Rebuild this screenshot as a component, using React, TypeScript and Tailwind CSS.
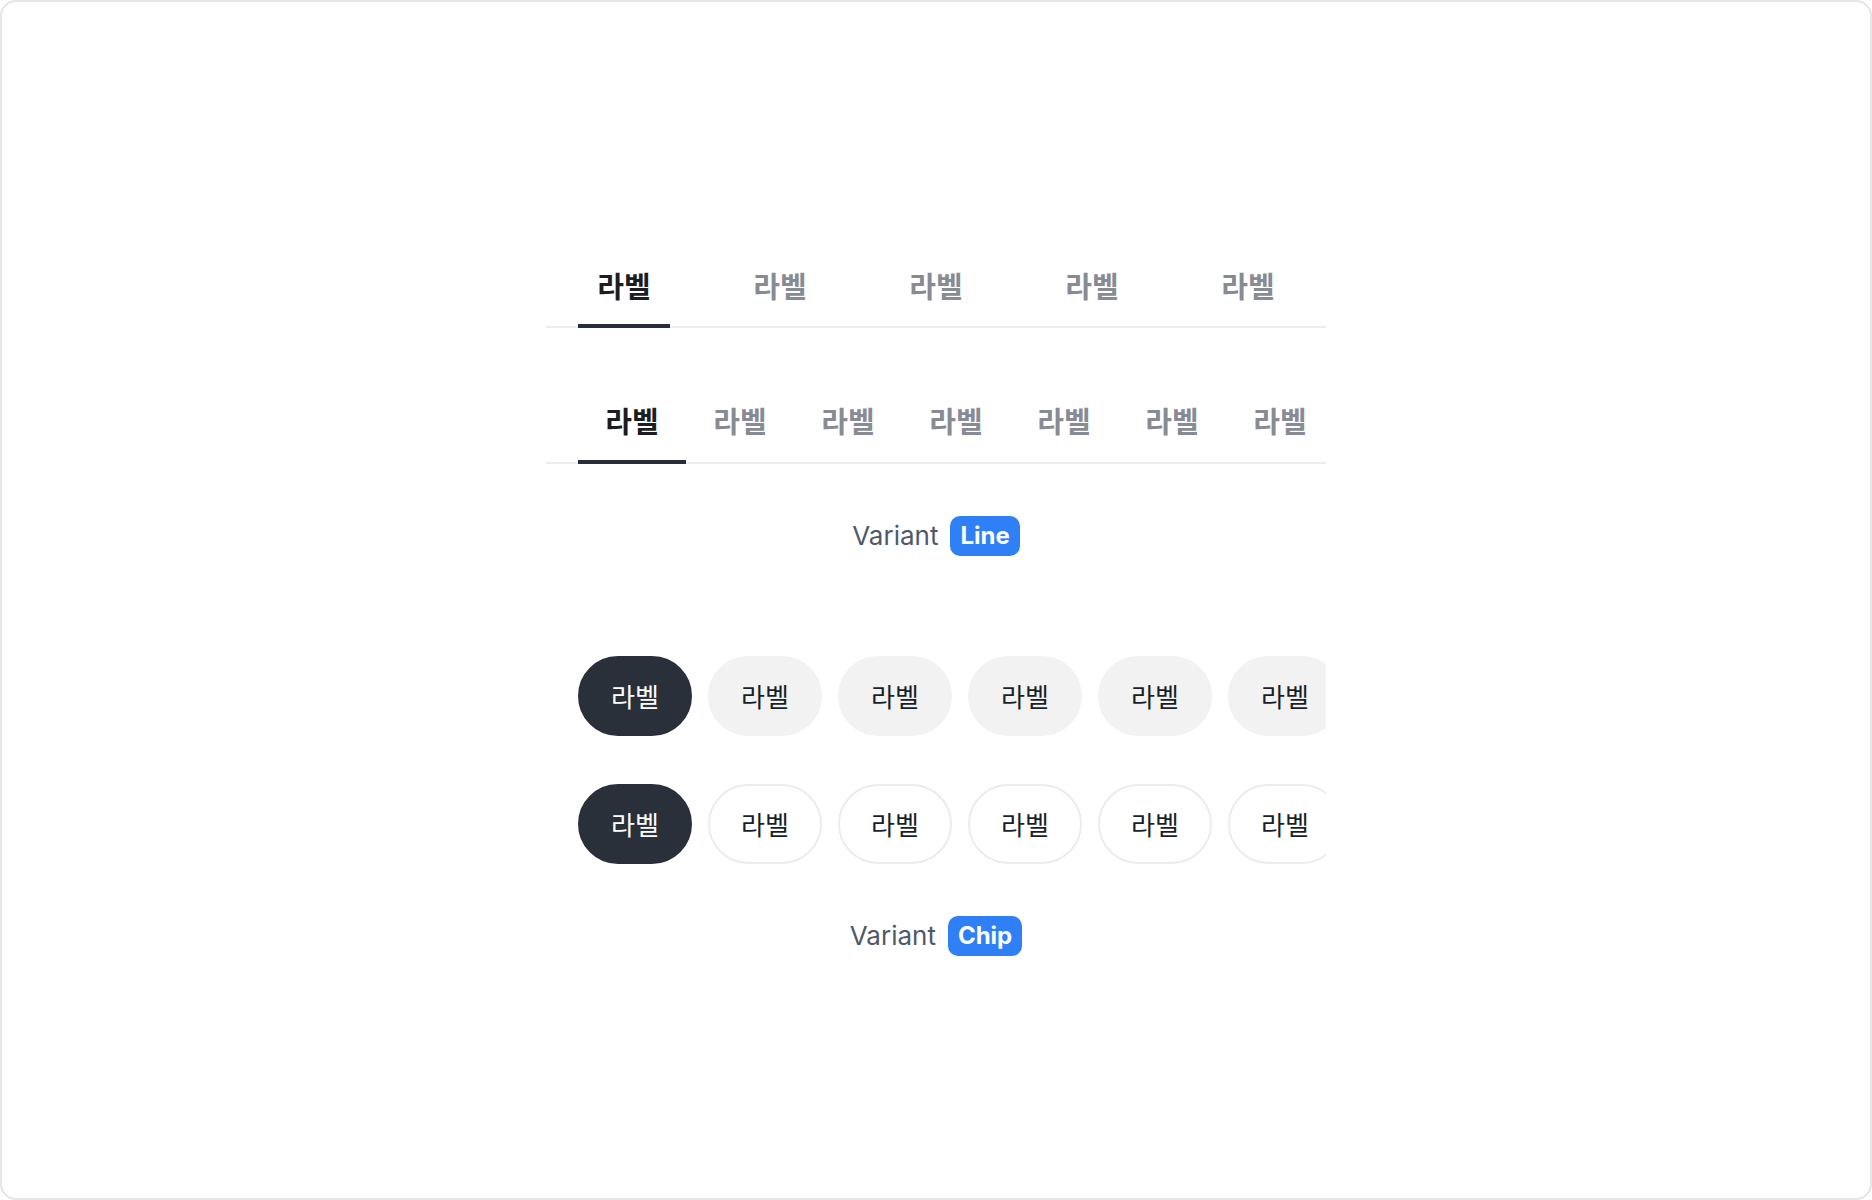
import { useState } from "react";

const KR_FONT = "font-['Noto_Sans_CJK_KR','Noto_Sans',sans-serif]";
const LATIN_FONT = "font-['Inter','Noto_Sans_CJK_KR',sans-serif]";

const LABEL = "라벨";

function VariantTag({ name }: { name: string }) {
  return (
    <div className={`mx-auto flex items-center gap-3 ${LATIN_FONT}`}>
      <span className="text-[26px] text-[#4e5968]">Variant</span>
      <span className="flex h-10 items-center rounded-[10px] bg-[#2f80f6] px-[10px] text-[24px] font-bold text-white">
        {name}
      </span>
    </div>
  );
}

function LineTabs({
  count,
  spread,
}: {
  count: number;
  spread?: boolean;
}) {
  const [active, setActive] = useState(0);
  return (
    // divider drawn as an inset shadow so the active tab's bar can sit over it
    <div
      className={`flex overflow-hidden px-8 shadow-[inset_0_-2px_0_#eeeeee] ${
        spread ? "justify-between" : ""
      }`}
    >
      {Array.from({ length: count }).map((_, i) => (
        <button
          key={i}
          type="button"
          onClick={() => setActive(i)}
          className={`flex shrink-0 justify-center border-b-4 pt-5 text-[29px] leading-[40px] font-bold ${KR_FONT} ${
            spread ? "w-[92px] pb-[19px]" : "w-[108px] pb-5"
          } ${
            active === i
              ? "border-[#272e38] text-[#1b1d22]"
              : "border-transparent text-[#878b94]"
          }`}
        >
          {LABEL}
        </button>
      ))}
    </div>
  );
}

function ChipRow({ outline }: { outline?: boolean }) {
  const [active, setActive] = useState(0);
  return (
    <div className="flex gap-4 overflow-hidden px-8">
      {Array.from({ length: 6 }).map((_, i) => (
        <button
          key={i}
          type="button"
          onClick={() => setActive(i)}
          className={`flex h-20 w-[114px] shrink-0 items-center justify-center rounded-full border-2 text-[26px] ${KR_FONT} ${
            active === i
              ? "border-[#29303a] bg-[#29303a] text-white"
              : outline
                ? "border-[#ececec] bg-white text-[#191f28]"
                : "border-[#f2f2f2] bg-[#f2f2f2] text-[#191f28]"
          }`}
        >
          {LABEL}
        </button>
      ))}
    </div>
  );
}

export default function App() {
  return (
    <div className="flex h-[1200px] w-[1872px] items-center justify-center rounded-2xl border-2 border-[#e5e5e5] bg-white">
      <div className="flex w-[780px] flex-col">
        <LineTabs count={5} spread />
        <div className="mt-[52px]">
          <LineTabs count={7} />
        </div>
        <div className="mt-[52px] flex">
          <VariantTag name="Line" />
        </div>

        <div className="mt-[100px] flex flex-col gap-12">
          <ChipRow />
          <ChipRow outline />
        </div>
        <div className="mt-[52px] flex">
          <VariantTag name="Chip" />
        </div>
      </div>
    </div>
  );
}
